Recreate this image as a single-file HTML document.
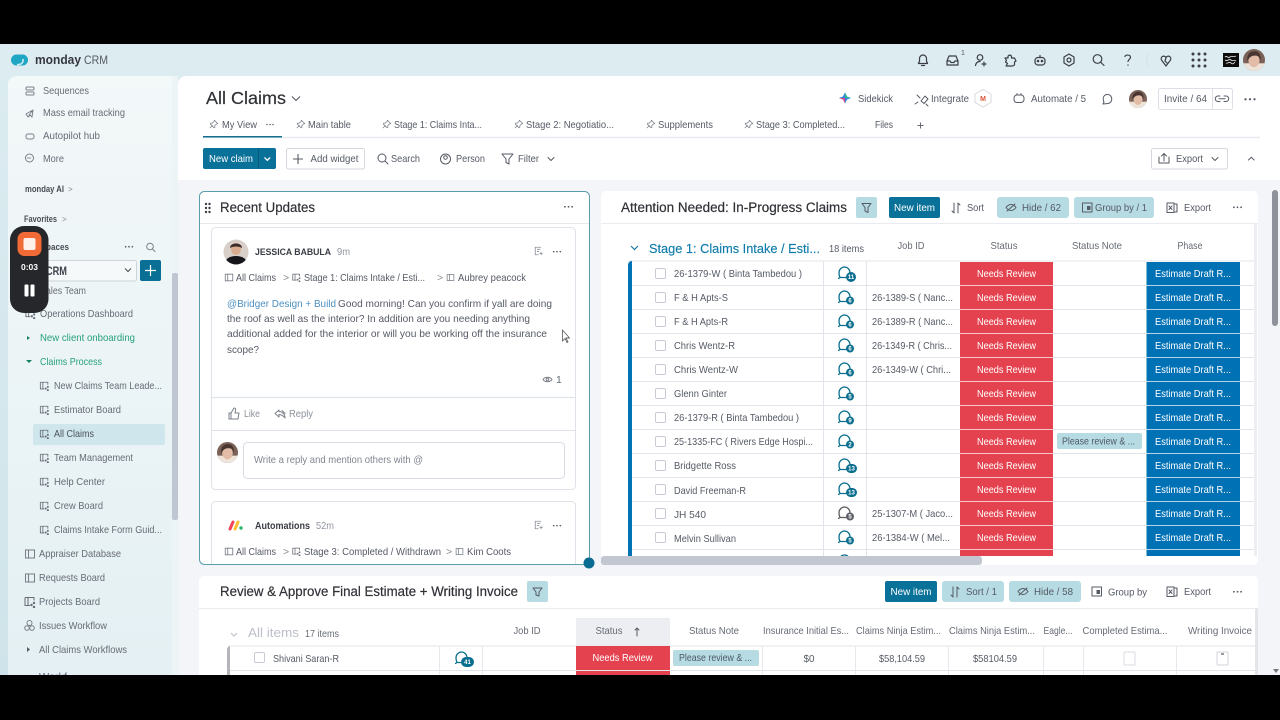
<!DOCTYPE html>
<html lang="en"><head><meta charset="utf-8"><title>All Claims - monday CRM</title>
<style>
html,body{margin:0;padding:0;background:#000;width:1280px;height:720px;overflow:hidden}
svg{display:block;font-family:"Liberation Sans",sans-serif;filter:blur(.3px)}
text{font-size:10.5px;fill:#555a65;white-space:pre}
.side{font-size:10.5px;fill:#676c76}
.dk{fill:#3a3d45}
.ttl{font-size:13.5px;fill:#2f3136;stroke:#2f3136;stroke-width:.2px}
.hd{font-size:10.5px;fill:#666b75}
.c{text-anchor:middle}
.w{fill:#fff}
.i{fill:none;stroke:#555a64;stroke-width:1;stroke-linecap:round;stroke-linejoin:round}
.ih{fill:none;stroke:#3b3e46;stroke-width:1.2;stroke-linecap:round;stroke-linejoin:round}
.is{fill:none;stroke:#7b808a;stroke-width:1;stroke-linejoin:round;stroke-linecap:round}
.bd{font-size:6px;fill:#fff;text-anchor:middle;font-weight:bold}
</style></head><body>
<svg width="1280" height="720" viewBox="0 0 1280 720" xmlns="http://www.w3.org/2000/svg">
<defs>
<linearGradient id="sb" x1="0" y1="0" x2="0" y2="1"><stop offset="0" stop-color="#f3f8f9"/><stop offset="1" stop-color="#e4f0f3"/></linearGradient>
<linearGradient id="lbg" x1="0" y1="0" x2="0" y2="1"><stop offset="0" stop-color="#dcecf1"/><stop offset="1" stop-color="#cfe4ea"/></linearGradient>
<clipPath id="tbl"><rect x="601" y="224" width="655" height="332"/></clipPath>
<clipPath id="pn"><rect x="200" y="224" width="387" height="340"/></clipPath>
<clipPath id="bot"><rect x="199" y="576" width="1059" height="99"/></clipPath>
<clipPath id="side"><rect x="8" y="76" width="164" height="599"/></clipPath>
<symbol id="bub" viewBox="0 0 18 16" overflow="visible"><path d="M3 12.500c-.2-1-1-2-1-4.500C2 4.500 4.500 2 7.500 2S13 4.500 13 8M3 12.500h6M1.500 13.500l1.500-1" fill="none" stroke="#0a6f8f" stroke-width="1.300" stroke-linecap="round"/></symbol>
<symbol id="brd" viewBox="0 0 12 12"><path d="M1.500 2h9v8h-9zM4.500 2v8" fill="none" stroke="#777c86"/></symbol>
<symbol id="shr" viewBox="0 0 12 12"><path d="M1 1.500h9v3M1 1.500v8h5M4 1.500v8" fill="none" stroke="#666b75"/><circle cx="10" cy="7" r="1.200" fill="#666b75"/><circle cx="7.500" cy="9" r="1.200" fill="#666b75"/><circle cx="10" cy="11" r="1.200" fill="#666b75"/></symbol>
<symbol id="cb" viewBox="0 0 11 11"><rect x=".5" y=".5" width="10" height="10" rx="1.500" fill="#fff" stroke="#c9ccd4"/></symbol>
<symbol id="pin" viewBox="0 0 12 12"><path d="M1 11l3.500-3.500M6.500 1.500l4 4-1.500.5-2 2v2L6 10.500 1.500 6l.5-1h2l2-2z" fill="none" stroke="#777c86" stroke-width=".9" stroke-linejoin="round"/></symbol>
<symbol id="dots" viewBox="0 0 12 4"><circle cx="2" cy="2" r="1" fill="#555a64"/><circle cx="6" cy="2" r="1" fill="#555a64"/><circle cx="10" cy="2" r="1" fill="#555a64"/></symbol>
<symbol id="upd" viewBox="0 0 12 12"><path d="M8.500 1.500h-7v9h4M3.500 4h4M3.500 6.500h2.500" fill="none" stroke="#8a8f99"/><path d="M8.500 7v4M6.500 9h4" stroke="#8a8f99"/></symbol>
<symbol id="face" viewBox="0 0 20 20"><clipPath id="fc"><circle cx="10" cy="10" r="10"/></clipPath><g clip-path="url(#fc)"><rect width="20" height="20" fill="#7b6258"/><rect y="13" width="20" height="7" fill="#efe4da"/><ellipse cx="10" cy="10.500" rx="5" ry="6" fill="#e2bca6"/><path d="M4 11C3 3 8 2 11 2s6 3 5 9c-1-4-2-5-5-5S6 7 4 11z" fill="#4a3631"/></g></symbol>
</defs>

<!-- black bars & background -->
<rect width="1280" height="720" fill="#000"/>
<rect y="44" width="1280" height="631" fill="url(#lbg)"/>
<rect y="44" width="1280" height="32" fill="#dcecf1"/>

<!-- logo -->
<rect x="11" y="54.500" width="17" height="11" rx="5.500" fill="#1fa6c4"/><path d="M17 64.500c4 .5 6.500-1.500 6-5.500" fill="none" stroke="#c8edf2" stroke-width="1.600"/>
<text x="35" y="64" textLength="46" style="font-size:12.500px;font-weight:bold;fill:#33363d">monday</text>
<text x="84" y="64" textLength="24" style="font-size:12px;fill:#555a64">CRM</text>

<!-- header icons -->
<g class="ih">
<path d="M918 64v-.5l1-1.500v-3a3.500 3.500 0 017 0v3l1 1.500v.5zM921 66h3" transform="translate(.5 -.5)"/>
<path d="M947 61l2-5h7l2 5v4h-11zM947 61h3l1 1.500h3l1-1.500h3"/>
<circle cx="980" cy="57.500" r="2.800"/><path d="M975.500 65.500c.5-3 2.500-4 4.500-4M984 62v4M982 64h4"/>
<path d="M1005 58h3v-1.500a1.800 1.800 0 013.500 0V58h3l1.500 3-1.500 1v3l-2 1h-6.500l1.500-2.500-2-1.500 1-1.500z"/>
<rect x="1035" y="57.500" width="10" height="7.500" rx="3"/><path d="M1040 55.500v2"/><circle cx="1038" cy="61" r=".7"/><circle cx="1042" cy="61" r=".7"/>
<path d="M1069 54l5 3v6l-5 3-5-3v-6z"/><circle cx="1069" cy="60" r="2"/>
<circle cx="1097.500" cy="59" r="4.300"/><path d="M1101 62.500l3 3"/>
<path d="M1125 56.500c.5-2 5-2 5.500.5.300 2-2.500 2.500-2.500 4.500M1128 65v.3"/>
<path d="M1166 66l-4.500-6c-1.500-3 2.500-5.500 4.500-2.500 2-3 6-.5 4.500 2.500zM1166 58l-1 3 2 2"/>
</g>
<path d="M1147 54v12" stroke="#cfe0e5"/>
<text x="961" y="55" style="font-size:7px;fill:#555">1</text>
<g fill="#3b3e46"><circle cx="1193" cy="54" r="1.500"/><circle cx="1199" cy="54" r="1.500"/><circle cx="1205" cy="54" r="1.500"/><circle cx="1193" cy="60" r="1.500"/><circle cx="1199" cy="60" r="1.500"/><circle cx="1205" cy="60" r="1.500"/><circle cx="1193" cy="66" r="1.500"/><circle cx="1199" cy="66" r="1.500"/><circle cx="1205" cy="66" r="1.500"/></g>
<rect x="1223" y="53" width="16" height="14" fill="#0c0c0c"/><path d="M1225 57c2-2 3 2 5 0s3 1 6-1M1225 60c3 2 4-2 6 0s3-1 5 1M1226 63c2 1 3-2 5 0s3 0 4-1" fill="none" stroke="#d8d8d8" stroke-width=".9"/>
<use href="#face" x="1243" y="49" width="22" height="22"/>

<!-- sidebar -->
<path d="M8 84a8 8 0 018-8h161v599H8z" fill="url(#sb)"/>
<g clip-path="url(#side)">
<g class="is"><rect x="26" y="87" width="8" height="3" rx="1"/><rect x="26" y="92" width="8" height="3" rx="1"/>
<path d="M26 114l7-4-1 7-2-2-2 2zM33 110l-4 5"/>
<rect x="26" y="134" width="8" height="5" rx="2"/>
<circle cx="29.500" cy="158" r="4"/><path d="M27.500 158h4" stroke-dasharray="1 1"/></g>
<text class="side" x="43" y="94" textLength="46">Sequences</text>
<text class="side" x="43" y="116" textLength="82">Mass email tracking</text>
<text class="side" x="43" y="139" textLength="57">Autopilot hub</text>
<text class="side" x="43" y="162" textLength="21">More</text>
<text x="25" y="192" textLength="39" style="font-size:9px;font-weight:bold;fill:#4a4d55">monday AI</text>
<text x="68" y="192" style="font-size:8px;fill:#888">&gt;</text>
<text x="24" y="222" textLength="33" style="font-size:9px;font-weight:bold;fill:#4a4d55">Favorites</text>
<text x="62" y="222" style="font-size:8px;fill:#888">&gt;</text>
<text x="46" y="250" textLength="23" style="font-size:9px;font-weight:bold;fill:#4a4d55">paces</text>
<use href="#dots" x="124" y="245" width="10" height="3.500"/>
<circle cx="150" cy="246.500" r="3.300" class="is"/><path d="M152.500 249l2.500 2.500" class="is"/>
<rect x="30" y="260.500" width="106.500" height="20.500" rx="2" fill="#f5f9fa" stroke="#cfd3da"/>
<text x="46" y="275" textLength="21" style="font-size:11.500px;font-weight:bold;fill:#3f424a">CRM</text>
<path d="M125 268.500l3 3 3-3" fill="none" stroke="#555a64" stroke-width="1.200"/>
<rect x="140" y="260" width="21" height="21" rx="2" fill="#0a6f94"/><path d="M150.500 265v11M145 270.500h11" stroke="#fff" stroke-width="1.200"/>
<text class="side" x="46" y="294" textLength="40">ales Team</text>
<text class="side" x="40" y="317" textLength="93">Operations Dashboard</text>
<use href="#shr" x="25" y="308" width="11" height="11"/>
<path d="M27 336l3 2-3 2z" fill="#157f62"/>
<text x="40" y="341" textLength="95" style="fill:#27a07c">New client onboarding</text>
<path d="M26 360h6l-3 3z" fill="#157f62"/>
<text x="40" y="365" textLength="62" style="fill:#27a07c">Claims Process</text>

<rect x="33" y="424" width="132" height="21" rx="2" fill="#cfe6ec"/>
<use href="#shr" x="39" y="381" width="11" height="10"/>
<use href="#shr" x="39" y="405" width="11" height="10"/>
<use href="#shr" x="39" y="429" width="11" height="10"/>
<use href="#shr" x="39" y="453" width="11" height="10"/>
<use href="#shr" x="39" y="477" width="11" height="10"/>
<use href="#shr" x="39" y="501" width="11" height="10"/>
<use href="#shr" x="39" y="525" width="11" height="10"/>
<text class="side" x="54" y="389" textLength="108">New Claims Team Leade...</text>
<text class="side" x="54" y="413" textLength="67">Estimator Board</text>
<text x="54" y="437" textLength="40" style="fill:#4c515b">All Claims</text>
<text class="side" x="54" y="461" textLength="79">Team Management</text>
<text class="side" x="54" y="485" textLength="51">Help Center</text>
<text class="side" x="54" y="509" textLength="49">Crew Board</text>
<text class="side" x="54" y="533" textLength="108">Claims Intake Form Guid...</text>
<use href="#brd" x="24" y="548" width="12" height="12"/>
<use href="#brd" x="24" y="572" width="12" height="12"/>
<use href="#shr" x="24" y="596" width="12" height="12"/>
<g class="is"><circle cx="29.500" cy="623" r="2.500"/><circle cx="27" cy="628" r="2.300"/><circle cx="32" cy="628" r="2.300"/></g>
<text class="side" x="39" y="557" textLength="82">Appraiser Database</text>
<text class="side" x="39" y="581" textLength="66">Requests Board</text>
<text class="side" x="39" y="605" textLength="61">Projects Board</text>
<text class="side" x="39" y="629" textLength="68">Issues Workflow</text>
<path d="M27 647l3 2.500-3 2.500z" fill="#555a64"/>
<text class="side" x="39" y="653" textLength="88">All Claims Workflows</text>
<text class="side" x="39" y="680" textLength="28">Workf</text>
</g>
<rect x="172" y="76" width="6" height="599" fill="#edf4f6"/>
<rect x="172" y="273" width="6" height="247" rx="2" fill="#bfc6d2"/>

<!-- recording widget -->
<rect x="10" y="226" width="38.500" height="87" rx="14" fill="#26272b"/>
<rect x="17.500" y="232" width="24" height="24" rx="7" fill="#f26a35"/>
<rect x="23.500" y="238" width="12" height="12" rx="2" fill="#fdf0ea"/>
<text x="29.500" y="270" class="c w" style="font-size:8.500px;font-weight:bold">0:03</text>
<rect x="24.500" y="284.500" width="4" height="12" rx="1" fill="#fff"/><rect x="30.500" y="284.500" width="4" height="12" rx="1" fill="#fff"/>

<!-- main -->
<path d="M178 84a8 8 0 018-8h1094v599H178z" fill="#f4f5f9"/>
<path d="M178 84a8 8 0 018-8h1094v104H178z" fill="#fff"/>

<text x="206" y="104" textLength="80" style="font-size:17.500px;fill:#2f3136;stroke:#2f3136;stroke-width:.2px">All Claims</text>
<path d="M292 96.500l4 4 4-4" fill="none" stroke="#555a64" stroke-width="1.100"/>

<!-- top-right actions -->
<path d="M845 92.500l2 4 4 1.500-4 1.500-2 4-2-4-4-1.500 4-1.500z" fill="#2e7fe0"/><path d="M845 92.500l2 4 4 1.500-6 0z" fill="#33b98f"/><path d="M839 98l4 1.500 2 4v-5.500z" fill="#e0478a"/>
<text x="858" y="102" textLength="35">Sidekick</text>
<g class="i"><path d="M917 95l3 3M921 101l4-5 3 3-4 4.500zM926 104l2 2M915 104l3-2"/></g>
<text x="931" y="102" textLength="38">Integrate</text>
<path d="M983 89.500l8 4.500v8.500l-8 4.500-8-4.500V94z" fill="#fff" stroke="#d7dae0"/>
<text x="983" y="101" class="c" style="font-size:7px;font-weight:bold;fill:#d9553a">M</text>
<g class="i"><rect x="1014" y="95" width="10" height="7.500" rx="3"/><path d="M1017 95v-1.500M1021 95v-1.500"/></g>
<text x="1031" y="102" textLength="55">Automate / 5</text>
<path d="M1103 104l1-2c-2-4 0-8 4-7.500 5 .5 5 8.500 0 9z" class="i"/>
<use href="#face" x="1129" y="90" width="18" height="18"/>
<rect x="1158.500" y="88.500" width="74" height="21" rx="2" fill="#fff" stroke="#dcdfe5"/><path d="M1212.500 88.500v21" stroke="#dcdfe5"/>
<text x="1164" y="102" textLength="43">Invite / 64</text>
<path d="M1220 96h-2a2.500 2.500 0 000 5.500h2M1224 96h2a2.500 2.500 0 010 5.500h-2M1219 98.700h6" class="i"/>
<use href="#dots" x="1243" y="97" width="14" height="4.500"/>

<!-- tabs -->
<path d="M203 137.500h1057" stroke="#e8eaef" stroke-width="1.500"/>
<rect x="203" y="136" width="79" height="1.500" fill="#146f90"/>
<use href="#pin" x="209" y="119" width="10" height="10"/>
<text x="222" y="128" textLength="35">My View</text>
<use href="#dots" x="265.500" y="123" width="9" height="3"/>
<use href="#pin" x="296" y="119" width="10" height="10"/>
<text x="308" y="128" textLength="43">Main table</text>
<use href="#pin" x="382" y="119" width="10" height="10"/>
<text x="394" y="128" textLength="88">Stage 1: Claims Inta...</text>
<use href="#pin" x="514" y="119" width="10" height="10"/>
<text x="526" y="128" textLength="88">Stage 2: Negotiatio...</text>
<use href="#pin" x="646" y="119" width="10" height="10"/>
<text x="658" y="128" textLength="55">Supplements</text>
<use href="#pin" x="744" y="119" width="10" height="10"/>
<text x="756" y="128" textLength="89">Stage 3: Completed...</text>
<text x="875" y="128" textLength="18">Files</text>
<path d="M917.500 125.500h6M920.500 122.500v6" stroke="#666b75"/>

<!-- toolbar -->
<rect x="203" y="148" width="73" height="21" rx="2" fill="#0a7199"/>
<path d="M258.500 148v21" stroke="#075a7b"/>
<text x="209" y="162" textLength="44" class="w">New claim</text>
<path d="M264.500 157.500l2.800 2.800 2.800-2.800" fill="none" stroke="#fff" stroke-width="1.300"/>
<rect x="286.500" y="148.500" width="78" height="20.500" rx="2" fill="#fff" stroke="#d4d7de"/>
<path d="M298 154v10M293 159h10" stroke="#555a64" stroke-width="1.100"/>
<text x="310.500" y="162" textLength="48">Add widget</text>
<circle cx="382" cy="158" r="4" class="i"/><path d="M385 161l3 3" class="i"/>
<text x="391" y="162" textLength="29">Search</text>
<circle cx="445.500" cy="159" r="5" class="i"/><circle cx="445.500" cy="157.500" r="1.800" class="i"/>
<text x="456" y="162" textLength="29">Person</text>
<path d="M502 154h11l-4 5v5l-3-1.500V159z" class="i"/>
<text x="518" y="162" textLength="21">Filter</text>
<path d="M548 157.500l3 3 3-3" class="i"/>
<rect x="1151.500" y="148.500" width="76" height="20.500" rx="2" fill="#fff" stroke="#d4d7de"/>
<path d="M1159 157v6h10v-6M1164 161v-7M1161.500 156l2.500-2.500 2.500 2.500" class="i"/>
<text x="1176" y="162" textLength="27">Export</text>
<path d="M1212 157.500l3 3 3-3" class="i"/>
<path d="M1248.500 160l2.800-2.800 2.800 2.800" class="i"/>

<!-- right page scrollbar -->
<rect x="1272" y="190" width="6" height="136" rx="3" fill="#8f929a"/>

<!-- Recent Updates panel -->
<rect x="199.500" y="191.500" width="390" height="373" rx="5" fill="#fff" stroke="#5b9daa"/>
<g fill="#3a3d45"><circle cx="206" cy="204" r="1.200"/><circle cx="209.500" cy="204" r="1.200"/><circle cx="206" cy="208" r="1.200"/><circle cx="209.500" cy="208" r="1.200"/><circle cx="206" cy="212" r="1.200"/><circle cx="209.500" cy="212" r="1.200"/></g>
<text x="220" y="212" textLength="95" class="ttl">Recent Updates</text>
<use href="#dots" x="563" y="205" width="11" height="3.600"/>
<path d="M200 223.500h389" stroke="#e6e8ee"/>
<g clip-path="url(#pn)">
<rect x="211.500" y="227.500" width="364" height="262" rx="4" fill="#fff" stroke="#dfe2e8"/>
<clipPath id="ja"><circle cx="236" cy="252" r="12.500"/></clipPath>
<g clip-path="url(#ja)"><rect x="223" y="239" width="26" height="26" fill="#d8cfc8"/><ellipse cx="236" cy="263" rx="11" ry="7" fill="#15151a"/><ellipse cx="236" cy="249" rx="5" ry="6" fill="#d9ab90"/><path d="M230 248c0-6 12-6 12 0-3-2-9-2-12 0z" fill="#3a2a25"/></g>
<text x="255" y="255" textLength="76" style="font-size:9.500px;font-weight:bold;fill:#3a3d45">JESSICA BABULA</text>
<text x="337" y="255" textLength="13" style="fill:#9095a0">9m</text>
<use href="#upd" x="534" y="246" width="10" height="10"/>
<use href="#dots" x="552" y="250" width="10" height="3.300"/>
<use href="#brd" x="224" y="272" width="10" height="11"/>
<text x="236" y="281" textLength="40">All Claims</text>
<text x="283" y="281" style="fill:#888">&gt;</text>
<use href="#shr" x="292" y="273" width="9" height="9"/>
<text x="304" y="281" textLength="121">Stage 1: Claims Intake / Esti...</text>
<text x="437" y="281" style="fill:#888">&gt;</text>
<use href="#brd" x="446" y="273" width="9" height="9"/>
<text x="458" y="281" textLength="68">Aubrey peacock</text>
<text x="227" y="307" textLength="109" style="fill:#4d8fc0">@Bridger Design + Build</text>
<text x="338" y="307" textLength="214">Good morning! Can you confirm if yall are doing</text>
<text x="227" y="322" textLength="303">the roof as well as the interior? In addition are you needing anything</text>
<text x="227" y="337" textLength="320">additional added for the interior or will you be working off the insurance</text>
<text x="227" y="353" textLength="32">scope?</text>
<path d="M543 379.500c2-3 7-3 9 0-2 3-7 3-9 0z" class="is"/><circle cx="547.500" cy="379.500" r="1.300" class="is"/>
<text x="556" y="383" style="fill:#666b75">1</text>
<path d="M212 397.500h363" stroke="#dfe2e8" stroke-width="1.300"/>
<path d="M229 419v-6h2l3-5c1.500 0 2 1 1.500 2.500l-.5 2.500h4l-1 6zM231 413v6" class="is"/>
<text x="244" y="417" textLength="16" style="fill:#8a8f99">Like</text>
<path d="M279 410l-4 3.500 4 3.500v-2.500c2 0 4 1 6 3.500 0-4-3-6.500-6-6.500zM282 410.500l3 3" class="is"/>
<text x="289" y="417" textLength="24" style="fill:#8a8f99">Reply</text>
<path d="M212 430.500h363" stroke="#dfe2e8"/>
<use href="#face" x="217" y="442" width="21" height="21"/>
<rect x="243.500" y="442.500" width="321" height="36" rx="4" fill="#fff" stroke="#d8dbe2"/>
<text x="254" y="463" textLength="169" style="fill:#80858f">Write a reply and mention others with @</text>

<rect x="211.500" y="501.500" width="364" height="100" rx="4" fill="#fff" stroke="#dfe2e8"/>
<path d="M230 529l3-7" stroke="#ef4555" stroke-width="3" stroke-linecap="round"/><path d="M235 529l3-7" stroke="#fdc02f" stroke-width="3" stroke-linecap="round"/><circle cx="241" cy="528" r="1.700" fill="#2db36f"/>
<text x="255" y="529" textLength="55" style="font-weight:bold;fill:#3a3d45">Automations</text>
<text x="316" y="529" textLength="18" style="fill:#9095a0">52m</text>
<use href="#upd" x="534" y="520" width="10" height="10"/>
<use href="#dots" x="552" y="524" width="10" height="3.300"/>
<use href="#brd" x="224" y="546" width="10" height="11"/>
<text x="236" y="555" textLength="40">All Claims</text>
<text x="283" y="555" style="fill:#888">&gt;</text>
<use href="#shr" x="292" y="547" width="9" height="9"/>
<text x="304" y="555" textLength="137">Stage 3: Completed / Withdrawn</text>
<text x="446" y="555" style="fill:#888">&gt;</text>
<use href="#brd" x="455" y="547" width="9" height="9"/>
<text x="467" y="555" textLength="44">Kim Coots</text>
<rect x="587" y="224" width="2.500" height="83" fill="#c3c7d2"/>
</g>
<path d="M562.500 330v11l2.500-2.500 2 4 1-.5-2-4h3.500z" fill="#fff" stroke="#444" stroke-width=".7"/>
<circle cx="589" cy="563" r="5.500" fill="#086b92"/>

<!-- Attention panel -->
<rect x="601" y="191" width="657" height="374" rx="5" fill="#fff"/>
<path d="M601 223.500h657" stroke="#e9ebf0"/>
<text x="621" y="212" textLength="226" class="ttl">Attention Needed: In-Progress Claims</text>
<rect x="856" y="197" width="21" height="21" rx="2" fill="#b6dbe3"/><path d="M862 203.500h9l-3 4v5l-3-1.500v-3.500z" class="i"/>
<rect x="889" y="197" width="51" height="21" rx="2" fill="#0a7199"/><text x="914.500" y="211" class="c w" textLength="41">New item</text>
<path d="M955 203v10l-2-2M959 213v-10l2 2" class="i" transform="translate(-1 0)"/>
<text x="967" y="211" textLength="17">Sort</text>
<rect x="997" y="197" width="72" height="21" rx="3" fill="#b6dbe3"/>
<path d="M1006 207.500c3-4 7-4 10 0-3 4-7 4-10 0zM1007 211l8-7" class="i"/>
<text x="1022" y="211" textLength="39">Hide / 62</text>
<rect x="1074" y="197" width="80" height="21" rx="3" fill="#b6dbe3"/>
<rect x="1082.500" y="203" width="9.500" height="9" class="i"/><rect x="1087" y="206" width="3.500" height="4" fill="#555a64"/>
<text x="1095" y="211" textLength="52">Group by / 1</text>
<rect x="1167" y="203" width="7" height="9.500" class="i"/><path d="M1174 204h3v8h-3M1169 206l3 3.500M1172 206l-3 3.500" class="i"/>
<text x="1184" y="211" textLength="27">Export</text>
<use href="#dots" x="1232" y="205.500" width="11" height="3.600"/>
<path d="M631 246l3.500 3.500 3.500-3.500" fill="none" stroke="#1a7ba0" stroke-width="1.200"/>
<text x="649" y="253" textLength="171" style="font-size:13px;fill:#0f7cab;stroke:#0f7cab;stroke-width:.15px">Stage 1: Claims Intake / Esti...</text>
<text x="829" y="252" textLength="35">18 items</text>
<text x="911" y="249" class="c hd" textLength="27">Job ID</text>
<text x="1004" y="249" class="c hd" textLength="27">Status</text>
<text x="1097" y="249" class="c hd" textLength="50">Status Note</text>
<text x="1190" y="249" class="c hd" textLength="25">Phase</text>
<path d="M628 261h628" stroke="#e3e5ea"/>

<g clip-path="url(#tbl)">
<path d="M632 285.500h624M632 309.500h624M632 333.500h624M632 357.500h624M632 381.500h624M632 405.500h624M632 429.500h624M632 453.500h624M632 477.500h624M632 501.500h624M632 525.500h624M632 549.500h624" stroke="#e1e4ea"/>
<path d="M823.500 261v296M866.500 261v296" stroke="#e1e4ea"/>
<path d="M628 265a4 4 0 014-4v296h-4z" fill="#0073b5"/>
<rect x="960" y="262" width="93" height="295" fill="#e4424f"/>
<rect x="1146.500" y="262" width="93.500" height="295" fill="#0071b4"/>
<path d="M960 285.500h93M960 309.500h93M960 333.500h93M960 357.500h93M960 381.500h93M960 405.500h93M960 429.500h93M960 453.500h93M960 477.500h93M960 501.500h93M960 525.500h93M960 549.500h93M1146 285.500h94M1146 309.500h94M1146 333.500h94M1146 357.500h94M1146 381.500h94M1146 405.500h94M1146 429.500h94M1146 453.500h94M1146 477.500h94M1146 501.500h94M1146 525.500h94M1146 549.500h94" stroke="#fff" stroke-opacity=".7"/>

<!-- checkboxes -->
<use href="#cb" x="655" y="268" width="11" height="11"/><use href="#cb" x="655" y="292" width="11" height="11"/><use href="#cb" x="655" y="316" width="11" height="11"/><use href="#cb" x="655" y="340" width="11" height="11"/><use href="#cb" x="655" y="364" width="11" height="11"/><use href="#cb" x="655" y="388" width="11" height="11"/><use href="#cb" x="655" y="412" width="11" height="11"/><use href="#cb" x="655" y="436" width="11" height="11"/><use href="#cb" x="655" y="460" width="11" height="11"/><use href="#cb" x="655" y="484" width="11" height="11"/><use href="#cb" x="655" y="508" width="11" height="11"/><use href="#cb" x="655" y="532" width="11" height="11"/>

<!-- names -->
<text x="674" y="277" textLength="128">26-1379-W ( Binta Tambedou )</text>
<text x="674" y="301" textLength="54">F &amp; H Apts-S</text>
<text x="674" y="325" textLength="54">F &amp; H Apts-R</text>
<text x="674" y="349" textLength="61">Chris Wentz-R</text>
<text x="674" y="373" textLength="64">Chris Wentz-W</text>
<text x="674" y="397" textLength="53">Glenn Ginter</text>
<text x="674" y="421" textLength="125">26-1379-R ( Binta Tambedou )</text>
<text x="674" y="445" textLength="139">25-1335-FC ( Rivers Edge Hospi...</text>
<text x="674" y="469" textLength="62">Bridgette Ross</text>
<text x="674" y="494" textLength="72">David Freeman-R</text>
<text x="674" y="518" textLength="32">JH 540</text>
<text x="674" y="542" textLength="62">Melvin Sullivan</text>

<!-- update icons -->
<use href="#bub" x="837" y="265" width="18" height="16"/><circle cx="851" cy="277" r="5" fill="#0a6f8f"/><text x="851" y="279" class="bd">11</text>
<use href="#bub" x="837" y="289" width="18" height="16"/><circle cx="850" cy="300.500" r="4" fill="#0a6f8f"/><text x="850" y="302.500" class="bd">6</text>
<use href="#bub" x="837" y="313" width="18" height="16"/><circle cx="850" cy="324.500" r="4" fill="#0a6f8f"/><text x="850" y="326.500" class="bd">6</text>
<use href="#bub" x="837" y="337" width="18" height="16"/><circle cx="850" cy="348.500" r="4" fill="#0a6f8f"/><text x="850" y="350.500" class="bd">6</text>
<use href="#bub" x="837" y="361" width="18" height="16"/><circle cx="850" cy="372.500" r="4" fill="#0a6f8f"/><text x="850" y="374.500" class="bd">6</text>
<use href="#bub" x="837" y="385" width="18" height="16"/><circle cx="850" cy="396.500" r="4" fill="#0a6f8f"/><text x="850" y="398.500" class="bd">5</text>
<use href="#bub" x="837" y="409" width="18" height="16"/><circle cx="850" cy="420.500" r="4" fill="#0a6f8f"/><text x="850" y="422.500" class="bd">9</text>
<use href="#bub" x="837" y="433" width="18" height="16"/><circle cx="850" cy="444.500" r="4" fill="#0a6f8f"/><text x="850" y="446.500" class="bd">2</text>
<use href="#bub" x="837" y="457" width="18" height="16"/><rect x="846" y="464" width="11" height="9" rx="4.500" fill="#0a6f8f"/><text x="851.500" y="470.500" class="bd">13</text>
<use href="#bub" x="837" y="481" width="18" height="16"/><rect x="846" y="488" width="11" height="9" rx="4.500" fill="#0a6f8f"/><text x="851.500" y="494.500" class="bd">13</text>
<use href="#bub" x="837" y="505" width="18" height="16" style="filter:grayscale(1)"/><circle cx="850" cy="516.500" r="4" fill="#5d6068"/><text x="850" y="518.500" class="bd">5</text>
<use href="#bub" x="837" y="529" width="18" height="16"/><circle cx="850" cy="540.500" r="4" fill="#0a6f8f"/><text x="850" y="542.500" class="bd">5</text>
<use href="#bub" x="837" y="553" width="18" height="16"/>

<!-- job ids -->
<text x="872" y="301" textLength="81">26-1389-S ( Nanc...</text>
<text x="872" y="325" textLength="81">26-1389-R ( Nanc...</text>
<text x="872" y="349" textLength="80">26-1349-R ( Chris...</text>
<text x="872" y="373" textLength="79">26-1349-W ( Chri...</text>
<text x="872" y="517" textLength="81">25-1307-M ( Jaco...</text>
<text x="872" y="541" textLength="78">26-1384-W ( Mel...</text>

<!-- statuses -->
<text class="w c" x="1006.500" y="277" textLength="59">Needs Review</text>
<text class="w c" x="1006.500" y="301" textLength="59">Needs Review</text>
<text class="w c" x="1006.500" y="325" textLength="59">Needs Review</text>
<text class="w c" x="1006.500" y="349" textLength="59">Needs Review</text>
<text class="w c" x="1006.500" y="373" textLength="59">Needs Review</text>
<text class="w c" x="1006.500" y="397" textLength="59">Needs Review</text>
<text class="w c" x="1006.500" y="421" textLength="59">Needs Review</text>
<text class="w c" x="1006.500" y="445" textLength="59">Needs Review</text>
<text class="w c" x="1006.500" y="469" textLength="59">Needs Review</text>
<text class="w c" x="1006.500" y="493" textLength="59">Needs Review</text>
<text class="w c" x="1006.500" y="517" textLength="59">Needs Review</text>
<text class="w c" x="1006.500" y="541" textLength="59">Needs Review</text>

<rect x="1057" y="433" width="85" height="16" rx="2" fill="#b6dbe3"/>
<text x="1062" y="444.500" textLength="73" style="fill:#4d5864">Please review &amp; ...</text>

<!-- phases -->
<text class="w" x="1155" y="277" textLength="76">Estimate Draft R...</text>
<text class="w" x="1155" y="301" textLength="76">Estimate Draft R...</text>
<text class="w" x="1155" y="325" textLength="76">Estimate Draft R...</text>
<text class="w" x="1155" y="349" textLength="76">Estimate Draft R...</text>
<text class="w" x="1155" y="373" textLength="76">Estimate Draft R...</text>
<text class="w" x="1155" y="397" textLength="76">Estimate Draft R...</text>
<text class="w" x="1155" y="421" textLength="76">Estimate Draft R...</text>
<text class="w" x="1155" y="445" textLength="76">Estimate Draft R...</text>
<text class="w" x="1155" y="469" textLength="76">Estimate Draft R...</text>
<text class="w" x="1155" y="493" textLength="76">Estimate Draft R...</text>
<text class="w" x="1155" y="517" textLength="76">Estimate Draft R...</text>
<text class="w" x="1155" y="541" textLength="76">Estimate Draft R...</text>
</g>
<rect x="1254" y="224" width="3" height="332" fill="#eceef2"/>
<rect x="601" y="556" width="381" height="9" rx="3" fill="#c3c7d2"/>

<!-- Bottom panel -->
<path d="M199 581a5 5 0 015-5h1049a5 5 0 015 5v94H199z" fill="#fff"/>
<g clip-path="url(#bot)">
<path d="M199 608.500h1059" stroke="#e9ebf0"/>
<text x="220" y="596" textLength="298" class="ttl">Review &amp; Approve Final Estimate + Writing Invoice</text>
<rect x="527" y="581" width="21" height="21" rx="2" fill="#b6dbe3"/><path d="M533 588h9l-3 4v4l-3-1v-3z" class="i"/>
<rect x="885" y="581" width="52" height="21" rx="2" fill="#0a7199"/><text x="911" y="595" class="c w" textLength="41">New item</text>
<rect x="942" y="581" width="62" height="21" rx="3" fill="#b6dbe3"/>
<path d="M953 587v10l-2-2M957 597v-10l2 2" class="i"/>
<text x="966" y="595" textLength="31">Sort / 1</text>
<rect x="1009" y="581" width="72" height="21" rx="3" fill="#b6dbe3"/>
<path d="M1018 591.500c3-4 7-4 10 0-3 4-7 4-10 0zM1019 595l8-7" class="i"/>
<text x="1034" y="595" textLength="39">Hide / 58</text>
<rect x="1092" y="587" width="9.500" height="9" class="i"/><rect x="1096.500" y="590" width="3.500" height="4" fill="#555a64"/>
<text x="1108" y="595.500" textLength="39">Group by</text>
<rect x="1167" y="587" width="7" height="9.500" class="i"/><path d="M1174 588h3v8h-3M1169 590l3 3.500M1172 590l-3 3.500" class="i"/>
<text x="1184" y="595" textLength="27">Export</text>
<use href="#dots" x="1232" y="590" width="11" height="3.600"/>

<path d="M231 633l3 3 3-3" fill="none" stroke="#bfc3cb" stroke-width="1.200"/>
<text x="248" y="637" textLength="51" style="font-size:12.500px;fill:#bcc0c8">All items</text>
<text x="305" y="637" textLength="34" style="fill:#666b75">17 items</text>
<rect x="576" y="618" width="94" height="28" fill="#eceef1"/>
<text x="527" y="634" class="c hd" textLength="27">Job ID</text>
<text x="609" y="634" class="c hd" textLength="27">Status</text>
<path d="M637 628v8M635 630l2-2 2 2" class="i"/>
<text x="714" y="634" class="c hd" textLength="50">Status Note</text>
<text x="806" y="634" class="c hd" textLength="86">Insurance Initial Es...</text>
<text x="898.500" y="634" class="c hd" textLength="85">Claims Ninja Estim...</text>
<text x="992" y="634" class="c hd" textLength="86">Claims Ninja Estim...</text>
<text x="1058" y="634" class="c hd" textLength="29">Eagle...</text>
<text x="1125" y="634" class="c hd" textLength="85">Completed Estima...</text>
<text x="1220" y="634" class="c hd" textLength="64">Writing Invoice</text>
<path d="M228 646h1028M230 670.500h1026" stroke="#e3e5ea"/>
<path d="M227 650a4 4 0 013-4v30h-3z" fill="#b3b5ba"/>
<path d="M439.500 646v30M482.500 646v30M762.500 646v30M855.500 646v30M948.500 646v30M1043.500 646v30M1083.500 646v30M1176.500 646v30" stroke="#e6e8ed"/>
<use href="#cb" x="254" y="652" width="11" height="11"/>
<text x="273" y="662" textLength="66">Shivani Saran-R</text>
<use href="#bub" x="454" y="650" width="18" height="16"/><rect x="461" y="657" width="13" height="10" rx="5" fill="#0a6f8f"/><text x="467.500" y="664" class="bd">41</text>
<rect x="576" y="646" width="94" height="24" fill="#e4424f"/><rect x="576" y="671" width="94" height="5" fill="#e4424f"/>
<text class="w c" x="622.500" y="661" textLength="60">Needs Review</text>
<rect x="673" y="650" width="86" height="16" rx="2" fill="#b6dbe3"/>
<text x="679" y="661" textLength="73" style="fill:#4d5864">Please review &amp; ...</text>
<text x="809" y="662" class="c" textLength="11">$0</text>
<text x="902" y="662" class="c" textLength="46">$58,104.59</text>
<text x="995" y="662" class="c" textLength="44">$58104.59</text>
<rect x="1124" y="652" width="11" height="13" rx="1" fill="#fff" stroke="#d8dbe0"/>
<rect x="1217" y="652" width="11" height="13" rx="1" fill="#fff" stroke="#d0d3d9"/><path d="M1221 654h3" stroke="#333"/>
<rect x="1255" y="609" width="3" height="66" fill="#e3e5ea"/>
</g>
<path d="M1273 669l3 4 3-4z" fill="#777"/>

<!-- bottom black bar -->
<rect y="675" width="1280" height="45" fill="#000"/>
</svg>
<script>document.querySelectorAll('text[textLength]').forEach(function(t){t.setAttribute('lengthAdjust','spacingAndGlyphs')});</script>
</body></html>
